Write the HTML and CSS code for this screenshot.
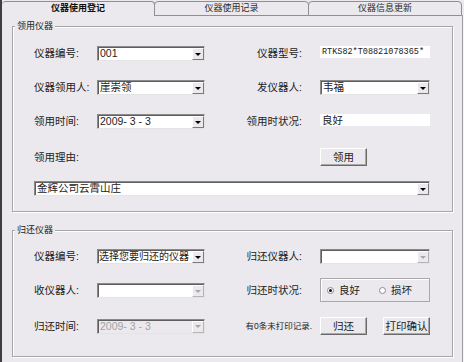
FILE: index.html
```html
<!DOCTYPE html>
<html lang="zh-CN">
<head>
    <meta charset="UTF-8">
    <meta name="viewport" content="width=device-width, initial-scale=1.0">
    <title>仪器使用登记</title>
    <link rel="stylesheet" href="styles.css">
</head>
<body>
    <div class="window">
        <div class="tabs">
            <div class="tab active">仪器使用登记</div>
            <div class="tab">仪器使用记录</div>
            <div class="tab">仪器信息更新</div>
        </div>

        <div class="panel">
            <!-- 领用 -->
            <fieldset class="group group-lend">
                <legend>领用仪器</legend>
                <div class="grid">
                    <span class="label">仪器编号:</span>
                    <div class="combo"><span class="value">001</span><span class="arrow"></span></div>
                    <span class="label right">仪器型号:</span>
                    <div class="textbox mono">RTKS82*T08821078365*</div>

                    <span class="label">仪器领用人:</span>
                    <div class="combo"><span class="value">崖崇领</span><span class="arrow"></span></div>
                    <span class="label right">发仪器人:</span>
                    <div class="combo"><span class="value">韦福</span><span class="arrow"></span></div>

                    <span class="label">领用时间:</span>
                    <div class="combo"><span class="value">2009- 3 - 3</span><span class="arrow"></span></div>
                    <span class="label right">领用时状况:</span>
                    <div class="textbox">良好</div>

                    <span class="label">领用理由:</span>
                    <span></span>
                    <span></span>
                    <div class="buttons"><button class="btn">领用</button></div>

                    <div class="combo wide"><span class="value">金辉公司云霄山庄</span><span class="arrow"></span></div>
                </div>
            </fieldset>

            <!-- 归还 -->
            <fieldset class="group group-return">
                <legend>归还仪器</legend>
                <div class="grid">
                    <span class="label">仪器编号:</span>
                    <div class="combo"><span class="value fit">选择您要归还的仪器</span><span class="arrow"></span></div>
                    <span class="label right">归还仪器人:</span>
                    <div class="combo disabled"><span class="value"></span><span class="arrow"></span></div>

                    <span class="label">收仪器人:</span>
                    <div class="combo disabled"><span class="value"></span><span class="arrow"></span></div>
                    <span class="label right">归还时状况:</span>
                    <div class="radio-box">
                        <span class="radio"><span class="dot checked"></span>良好</span>
                        <span class="radio"><span class="dot"></span>损坏</span>
                    </div>

                    <span class="label">归还时间:</span>
                    <div class="combo disabled grey"><span class="value">2009- 3 - 3</span><span class="arrow"></span></div>
                    <span class="note">有0条未打印记录.</span>
                    <div class="buttons split">
                        <button class="btn">归还</button>
                        <button class="btn">打印确认</button>
                    </div>
                </div>
            </fieldset>
        </div>
    </div>
</body>
</html>
```

FILE: styles.css
```css
/* General */
body {
    margin: 0;
    background-color: #4a4a4a;
    font-family: "Liberation Sans", "Noto Sans CJK SC", sans-serif;
    font-size: 10.5px;
    line-height: 13px;
    color: #222;
}

.window {
    width: 464px;
    box-sizing: border-box;
    border-left: 2px solid #3e3e3e;
    background-color: #ebe9ed;
}

/* Tabs */
.tabs {
    display: flex;
    height: 15px;
    background-color: #ebe9ed;
}

.tab {
    box-sizing: border-box;
    width: 155px;
    height: 15px;
    margin-top: 1px;
    border: 1px solid #8f8f8f;
    border-radius: 4px 4px 0 0;
    margin-left: -1px;
    font-size: 9px;
    line-height: 12px;
    text-align: center;
    color: #2a2a2a;
}

.tab.active {
    border-left: none;
    border-bottom: none;
    margin-left: 0;
    width: 153px;
    font-weight: bold;
    color: #111;
}

.tab:last-child {
    width: 154px;
}

/* Panel */
.panel {
    padding: 5px 10px 7px 10px;
    border-right: 1px solid #f6f6f6;
    border-bottom: 1px solid #a0a0a0;
    box-shadow: inset -1px 0 #9d9d9d;
}

.group {
    margin: 0;
    padding: 14px 0 11px 21px;
    border: 1px solid #a6a6a6;
    box-shadow: inset 1px 1px #fff, 1px 1px #fff;
    min-inline-size: 0;
}

.group legend {
    margin-left: -19px;
    padding: 0 2px;
    font-size: 9px;
    line-height: 12px;
    color: #222;
    background-color: #ebe9ed;
}

.group-return {
    margin-top: 12px;
    padding: 13px 0 21px 21px;
}

.grid {
    display: grid;
    grid-template-columns: 63px 108px 115px 110px;
    grid-auto-rows: 15px;
    row-gap: 19px;
    align-items: center;
}

.group-lend .grid {
    grid-template-rows: 15px 15px 15px 18px 15px;
}

.group-return .grid {
    grid-template-rows: 15px 15px 18px;
}

.label {
    white-space: nowrap;
}

.label.right {
    text-align: right;
    padding-right: 18px;
}

/* Combo */
.combo {
    display: flex;
    align-items: center;
    height: 15px;
    box-sizing: border-box;
    background-color: #fff;
    border: 1px solid;
    border-color: #8a8a8a #e4e4e4 #e4e4e4 #8a8a8a;
    box-shadow: inset 1px 1px #5e5e5e;
    overflow: hidden;
}

.combo.wide {
    grid-column: 1 / 5;
    margin-top: -8px;
}

.combo .value {
    flex: 1;
    min-width: 0;
    padding-left: 2px;
    white-space: nowrap;
    overflow: hidden;
}

.combo .value.fit {
    font-size: 10px;
    padding-left: 1px;
}

.arrow {
    display: flex;
    flex-shrink: 0;
    align-items: center;
    justify-content: center;
    width: 12px;
    height: 12px;
    align-self: flex-end;
    box-sizing: border-box;
    background-color: #ebe9ed;
    border: 1px solid;
    border-color: #fff #7a7a7a #7a7a7a #fff;
}

.arrow::after {
    content: "";
    border-left: 3px solid transparent;
    border-right: 3px solid transparent;
    border-top: 3px solid #000;
}

.combo.disabled .arrow {
    border-color: #fff #b4b4b4 #b4b4b4 #fff;
}

.combo.disabled .arrow::after {
    border-top-color: #a8a8a8;
}

.combo.grey {
    background-color: #ebe9ed;
    color: #a3a3a3;
}

/* Textbox */
.textbox {
    align-self: start;
    height: 12px;
    line-height: 12px;
    padding-left: 2px;
    background-color: #fff;
    white-space: nowrap;
}

.mono {
    font-family: "Liberation Mono", monospace;
    font-size: 8.5px;
}

/* Buttons */
.buttons {
    display: flex;
    height: 18px;
}

.buttons.split {
    justify-content: space-between;
}

.btn {
    width: 47px;
    height: 18px;
    padding: 0;
    box-sizing: border-box;
    background-color: #ebe9ed;
    border: 1px solid;
    border-color: #fff #6a6a6a #6a6a6a #fff;
    box-shadow: inset -1px -1px #a8a8a8;
    font-family: "Liberation Sans", "Noto Sans CJK SC", sans-serif;
    font-size: 10.5px;
    line-height: 15px;
    color: #222;
}

/* Radio */
.radio-box {
    display: flex;
    align-items: center;
    height: 24px;
    margin: -5px 0 -4px 0;
    box-sizing: border-box;
    padding-left: 6px;
    border: 1px solid #a9a9a9;
    box-shadow: inset 1px 1px #fff;
}

.radio {
    display: flex;
    align-items: center;
    gap: 5px;
}

.radio + .radio {
    margin-left: 19px;
}

.dot {
    display: flex;
    align-items: center;
    justify-content: center;
    width: 7px;
    height: 7px;
    box-sizing: border-box;
    border: 1px solid #8a8a8a;
    border-radius: 50%;
    background-color: #fff;
}

.dot.checked::after {
    content: "";
    width: 3px;
    height: 3px;
    border-radius: 50%;
    background-color: #111;
}

.note {
    justify-self: end;
    margin-right: 8px;
    font-size: 8.5px;
    white-space: nowrap;
}
```
